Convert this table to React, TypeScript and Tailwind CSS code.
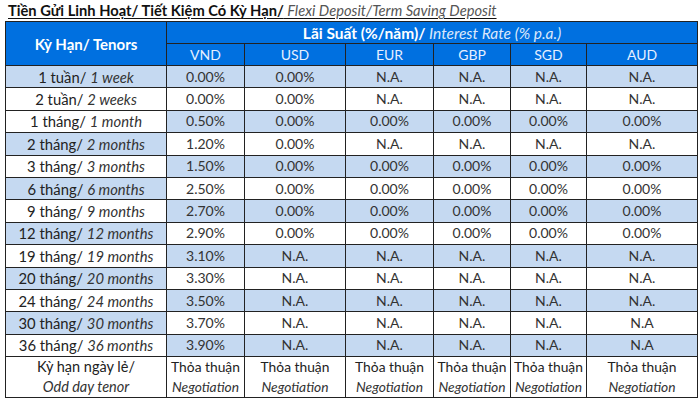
import React from "react";

type Row = { vi: string; en: string; vals: string[] };

const rows: Row[] = [
  { vi: "1 tuần/", en: "1 week", vals: ["0.00%", "0.00%", "N.A.", "N.A.", "N.A.", "N.A."] },
  { vi: "2 tuần/", en: "2 weeks", vals: ["0.00%", "0.00%", "N.A.", "N.A.", "N.A.", "N.A."] },
  { vi: "1 tháng/", en: "1 month", vals: ["0.50%", "0.00%", "0.00%", "0.00%", "0.00%", "0.00%"] },
  { vi: "2 tháng/", en: "2 months", vals: ["1.20%", "0.00%", "N.A.", "N.A.", "N.A.", "N.A."] },
  { vi: "3 tháng/", en: "3 months", vals: ["1.50%", "0.00%", "0.00%", "0.00%", "0.00%", "0.00%"] },
  { vi: "6 tháng/", en: "6 months", vals: ["2.50%", "0.00%", "0.00%", "0.00%", "0.00%", "0.00%"] },
  { vi: "9 tháng/", en: "9 months", vals: ["2.70%", "0.00%", "0.00%", "0.00%", "0.00%", "0.00%"] },
  { vi: "12 tháng/", en: "12 months", vals: ["2.90%", "0.00%", "0.00%", "0.00%", "0.00%", "0.00%"] },
  { vi: "19 tháng/", en: "19 months", vals: ["3.10%", "N.A.", "N.A.", "N.A.", "N.A.", "N.A."] },
  { vi: "20 tháng/", en: "20 months", vals: ["3.30%", "N.A.", "N.A.", "N.A.", "N.A.", "N.A."] },
  { vi: "24 tháng/", en: "24 months", vals: ["3.50%", "N.A.", "N.A.", "N.A.", "N.A.", "N.A."] },
  { vi: "30 tháng/", en: "30 months", vals: ["3.70%", "N.A.", "N.A.", "N.A.", "N.A.", "N.A"] },
  { vi: "36 tháng/", en: "36 months", vals: ["3.90%", "N.A.", "N.A.", "N.A.", "N.A.", "N.A"] },
];

const currencies = ["VND", "USD", "EUR", "GBP", "SGD", "AUD"];

export default function App() {
  return (
    <div
      className="w-[700px] h-[401px] bg-white overflow-hidden pl-[5px] pr-[3px]"
      style={{ fontFamily: "Lato, 'Noto Sans', sans-serif" }}
    >
      <div className="h-[21px] pl-[3px] pt-[1px] text-[14.7px] leading-[18px] text-[#111] underline underline-offset-2 whitespace-nowrap">
        <span className="font-bold">Tiền Gửi Linh Hoạt/ Tiết Kiệm Có Kỳ Hạn/</span>
        <span className="italic text-[#555]"> Flexi Deposit/Term Saving Deposit</span>
      </div>
      <table className="table-fixed border-collapse w-[692px] text-[14px] leading-[18px] text-[#333]">
        <colgroup>
          <col className="w-[161px]" />
          <col className="w-[78px]" />
          <col className="w-[101px]" />
          <col className="w-[88px]" />
          <col className="w-[77px]" />
          <col className="w-[76px]" />
          <col className="w-[111px]" />
        </colgroup>
        <thead>
          <tr className="h-[22px]">
            <th
              rowSpan={2}
              className="bg-[#0070e0] text-white font-bold text-[15px] leading-[18px] border border-[#222] p-0"
            >
              Kỳ Hạn/ Tenors
            </th>
            <th
              colSpan={6}
              className="bg-[#0070e0] text-white text-[15.5px] leading-[18px] border border-[#222] p-0 font-normal"
            >
              <span className="font-bold">Lãi Suất (%/năm)/</span>
              <span className="italic text-[#dbe8fb]"> Interest Rate (% p.a.)</span>
            </th>
          </tr>
          <tr className="h-[22px]">
            {currencies.map((c) => (
              <th
                key={c}
                className="bg-[#0070e0] text-[#e6efff] font-normal text-[14px] leading-[18px] border border-[#222] p-0"
              >
                {c}
              </th>
            ))}
          </tr>
        </thead>
        <tbody>
          {rows.map((r, i) => {
            const dataShaded = i < 2 ? i === 0 : i % 2 === 0;
            const tenorShaded = i < 2 ? i === 0 : i % 2 === 1;
            return (
              <tr key={r.en} className="h-[22.4px]">
                <td
                  className={`border border-[#222] p-0 text-center whitespace-nowrap text-[14.8px] leading-[18px] text-[#222] ${
                    tenorShaded ? "bg-[#c5d9f1]" : "bg-white"
                  }`}
                >
                  {r.vi} <span className="italic text-[#333]">{r.en}</span>
                </td>
                {r.vals.map((v, j) => (
                  <td
                    key={j}
                    className={`border border-[#222] p-0 text-center leading-[18px] ${
                      dataShaded ? "bg-[#c5d9f1]" : "bg-white"
                    }`}
                  >
                    {v}
                  </td>
                ))}
              </tr>
            );
          })}
          <tr className="h-[40px]">
            <td className="border border-[#222] p-0 text-center text-[14.5px] text-[#222] leading-[20px] whitespace-nowrap">
              <div>Kỳ hạn ngày lẻ/</div>
              <div className="italic text-[#333]">Odd day tenor</div>
            </td>
            {currencies.map((c) => (
              <td key={c} className="border border-[#222] p-0 text-center text-[13.8px] leading-[20px] text-[#222] whitespace-nowrap">
                <div>Thỏa thuận</div>
                <div className="italic text-[#333]">Negotiation</div>
              </td>
            ))}
          </tr>
        </tbody>
      </table>
    </div>
  );
}
